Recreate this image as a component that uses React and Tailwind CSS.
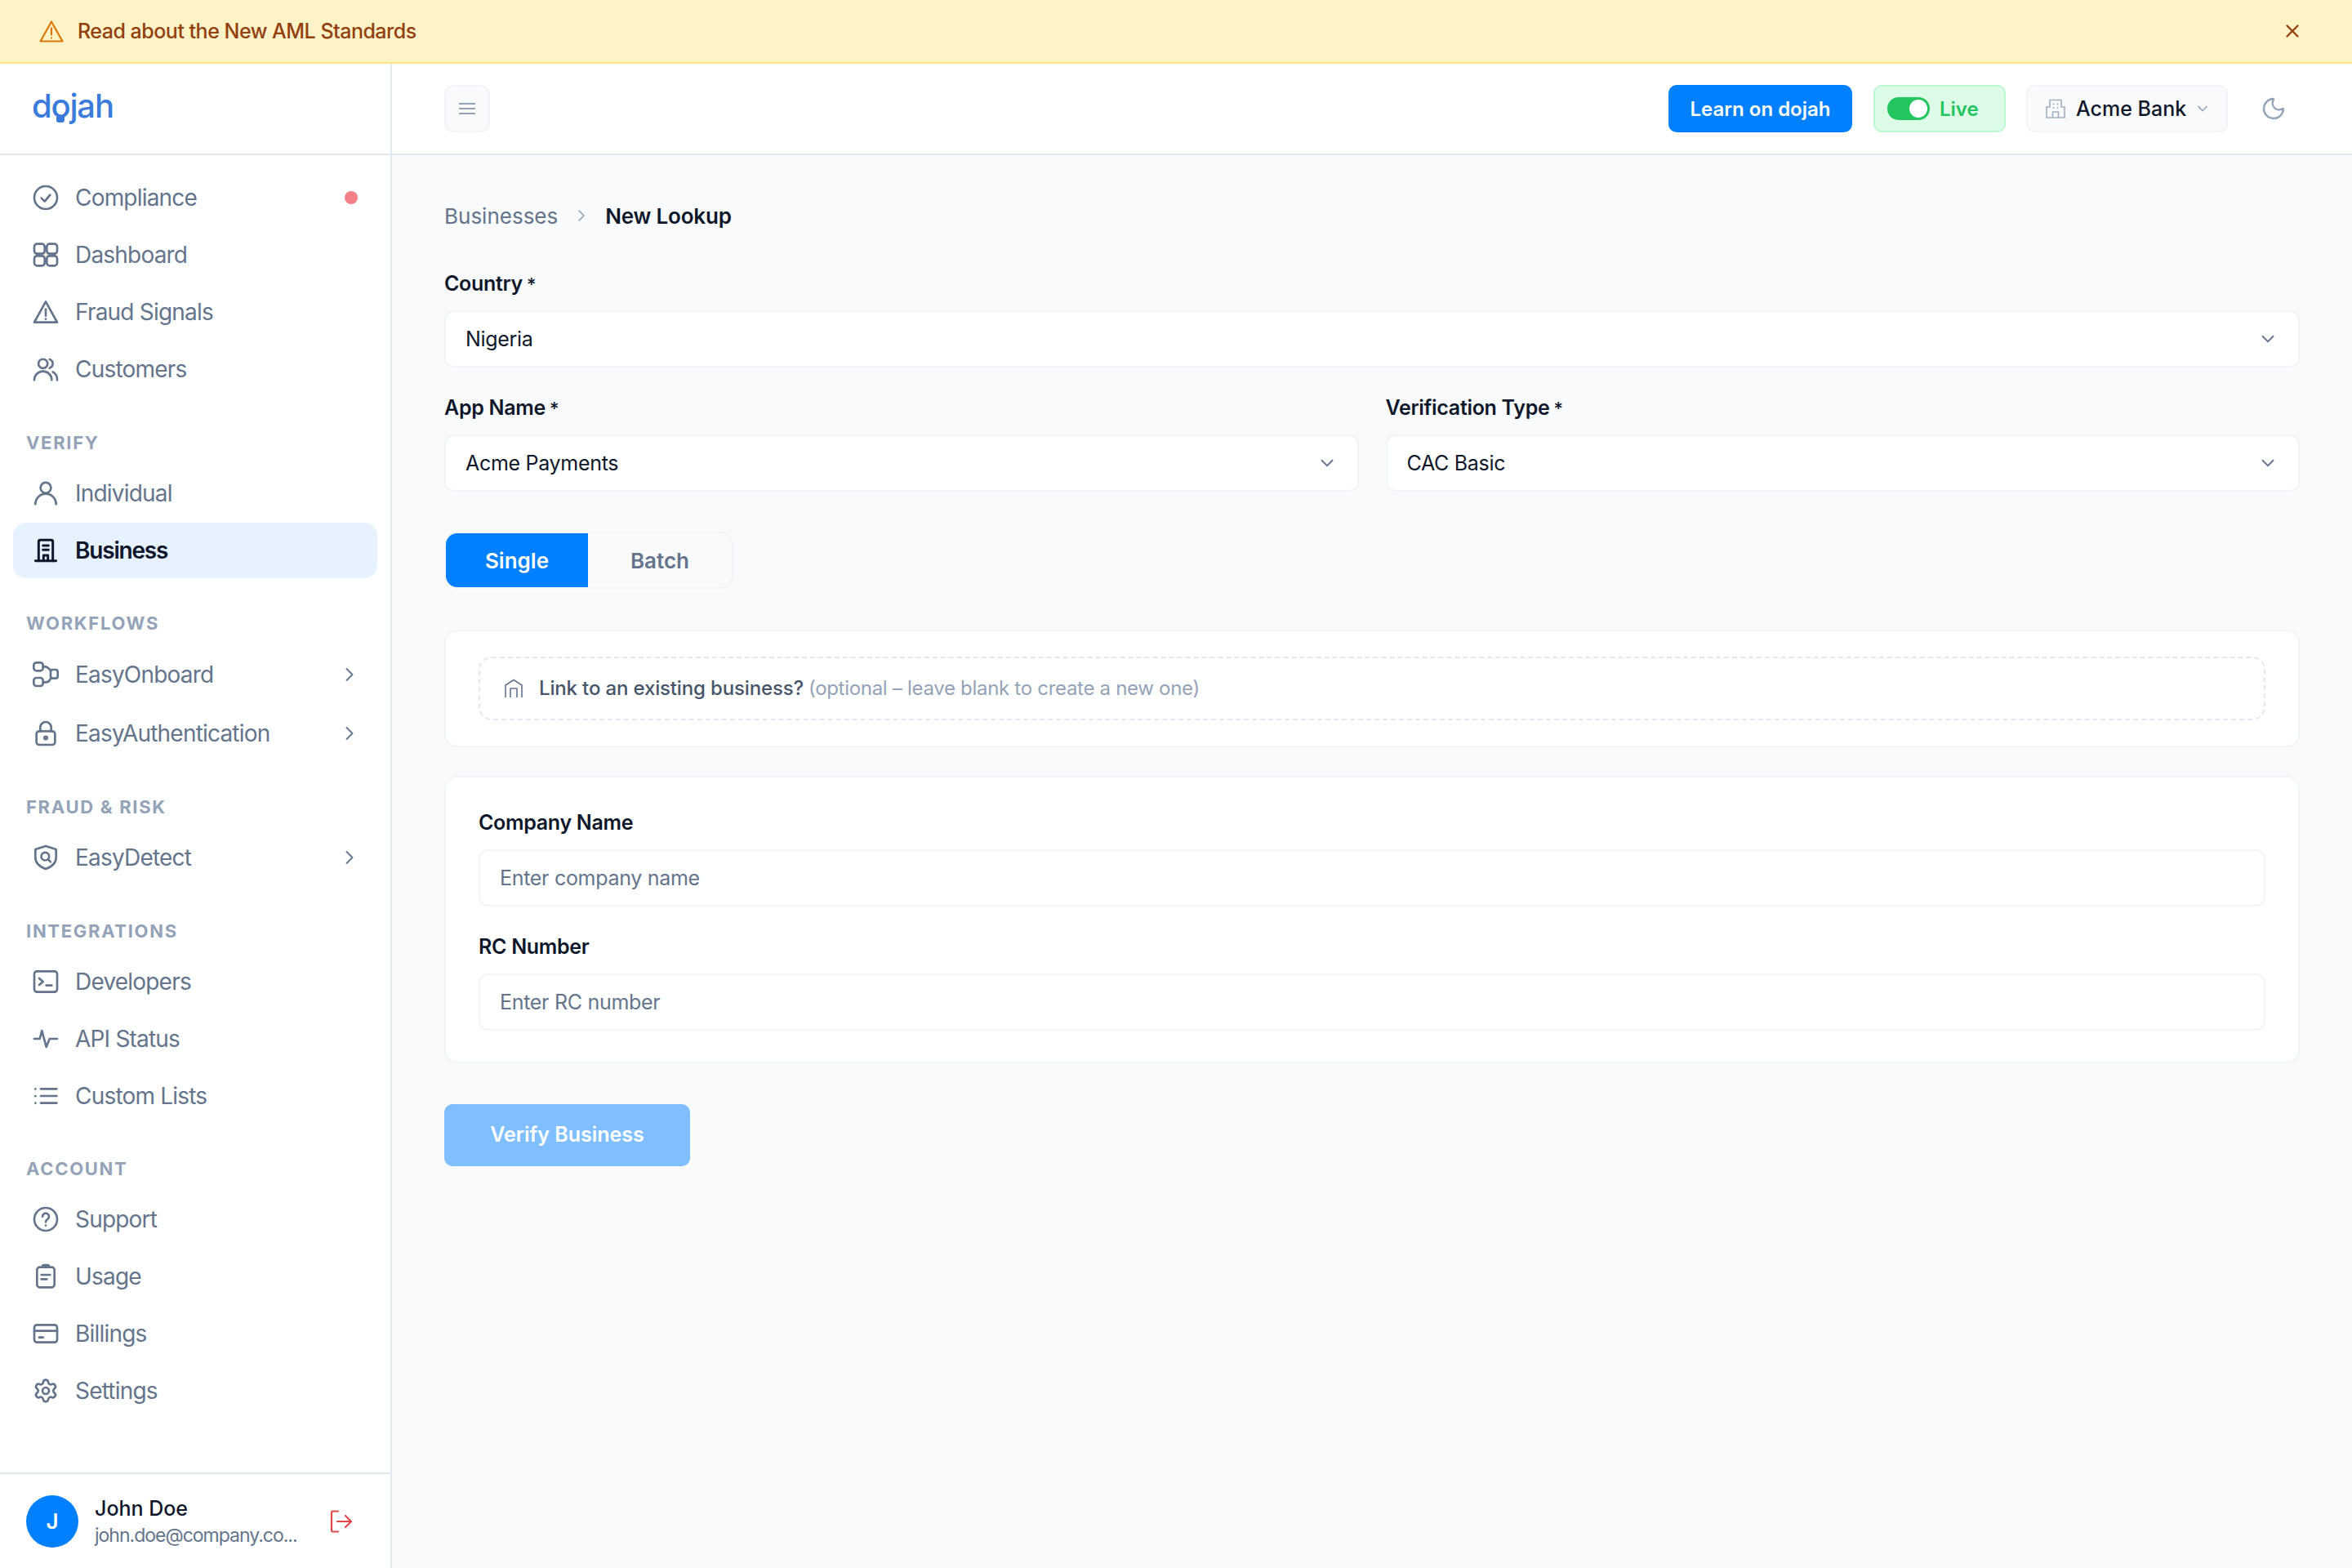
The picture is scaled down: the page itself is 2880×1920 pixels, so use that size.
import { ChevronDown, ChevronRight, Moon, Settings, X } from "lucide-react";

const Svg = ({ children, className = "w-[32px] h-[32px]", sw = 2 }) => (
  <svg viewBox="0 0 24 24" fill="none" stroke="currentColor" strokeWidth={sw} strokeLinecap="round" strokeLinejoin="round" className={`shrink-0 ${className}`}>
    {children}
  </svg>
);

const icons = {
  compliance: <Svg><circle cx="12" cy="12" r="10.5" /><path d="M8 12.5l3 3 5-6" /></Svg>,
  dashboard: (
    <Svg>
      <rect x="1.5" y="2" width="9.5" height="9" rx="2.500" />
      <rect x="13" y="2" width="9.5" height="9" rx="2.500" />
      <rect x="1.5" y="13" width="9.5" height="9" rx="2.500" />
      <rect x="13" y="13" width="9.5" height="9" rx="2.500" />
    </Svg>
  ),
  fraud: <Svg><path d="M12 2.5L22.5 21.5H1.5Z" /><path d="M12 9.5v6" /><path d="M12 18.4v.1" /></Svg>,
  customers: (
    <Svg>
      <circle cx="9.5" cy="7" r="4.2" />
      <path d="M1.5 22a8 8 0 0 1 16 0" />
      <path d="M15.5 3a4.2 4.2 0 0 1 0 8" />
      <path d="M18.5 14.5a8 8 0 0 1 4 7.5" />
    </Svg>
  ),
  individual: <Svg><circle cx="12" cy="7" r="4.8" /><path d="M2.5 22a9.5 9.5 0 0 1 19 0" /></Svg>,
  business: (
    <Svg sw={2.200}>
      <path d="M5.5 21.5V4A1.5 1.5 0 0 1 7 2.5h10A1.5 1.5 0 0 1 18.5 4v17.5" />
      <path d="M2.5 21.5h19" />
      <path d="M9.5 7.500h5" />
      <path d="M9.5 11.500h5" />
      <path d="M10 21.5V16.5h4v5" />
    </Svg>
  ),
  onboard: (
    <Svg>
      <rect x="1" y="1" width="8.5" height="7.5" rx="2.5" />
      <rect x="16.5" y="7.5" width="6.5" height="8" rx="2" />
      <rect x="1" y="15" width="8.5" height="7.5" rx="2.5" />
      <path d="M9.5 4.8h2c2 0 3 1.2 5 3.5" />
      <path d="M9.5 19h2.5c2.500 0 3.500-1 4.500-3.500" />
    </Svg>
  ),
  lock: <Svg><rect x="3.500" y="10" width="17" height="12.500" rx="2.500" /><path d="M7 10V6.500a5 5 0 0 1 10 0V10" /><circle cx="12" cy="16.200" r="1.300" /></Svg>,
  detect: (
    <Svg>
      <path d="M12 1.500L21.500 4.500V12c0 5-4 8.500-9.500 10.500C6.500 20.500 2.500 17 2.500 12V4.500Z" />
      <circle cx="11.500" cy="11" r="3.600" />
      <path d="M14.200 13.700l2.300 2.300" />
    </Svg>
  ),
  developers: <Svg><rect x="1.500" y="2.500" width="21" height="19" rx="2.500" /><path d="M6 9l3.500 3L6 15" /><path d="M12.500 15.500h5" /></Svg>,
  status: <Svg><path d="M1.500 12h5l2-7.500 4 15 3-7.500h7" /></Svg>,
  lists: (
    <Svg>
      <path d="M7.500 5.500H22" />
      <path d="M7.500 12H22" />
      <path d="M7.500 18.500H22" />
      <path d="M2.500 5.500v.1" />
      <path d="M2.500 12v.1" />
      <path d="M2.500 18.500v.1" />
    </Svg>
  ),
  support: <Svg><circle cx="12" cy="12" r="10.500" /><path d="M9 9.500a3 3 0 1 1 4.500 2.600c-1 .6-1.500 1.200-1.500 2.400" /><path d="M12 17.600v.1" /></Svg>,
  usage: (
    <Svg>
      <rect x="4" y="3.500" width="16" height="18.500" rx="2.500" />
      <path d="M9 3V2.800a1.300 1.300 0 0 1 1.300-1.300h3.400A1.300 1.300 0 0 1 15 2.800V3.500H9Z" fill="currentColor" />
      <path d="M8 10.500h8" />
      <path d="M8 14.500h5" />
    </Svg>
  ),
  billing: <Svg><rect x="1.500" y="4" width="21" height="16" rx="2.500" /><path d="M1.500 9.500h21" /><path d="M6 15.500h3.500" /></Svg>,
  settings: <Settings className="w-[32px] h-[32px] shrink-0" strokeWidth={2} />,
};

const sections = [
  {
    items: [
      { label: "Compliance", icon: "compliance", dot: true },
      { label: "Dashboard", icon: "dashboard" },
      { label: "Fraud Signals", icon: "fraud" },
      { label: "Customers", icon: "customers" },
    ],
  },
  {
    title: "VERIFY",
    wrap: "mt-[41px]",
    label: "mb-[13px]",
    items: [
      { label: "Individual", icon: "individual" },
      { label: "Business", icon: "business", active: true },
    ],
  },
  {
    title: "WORKFLOWS",
    wrap: "mt-[40px]",
    label: "mb-[13px]",
    items: [
      { label: "EasyOnboard", icon: "onboard", more: true },
      { label: "EasyAuthentication", icon: "lock", more: true },
    ],
  },
  {
    title: "FRAUD & RISK",
    wrap: "mt-[40px]",
    label: "mb-[12px]",
    items: [{ label: "EasyDetect", icon: "detect", more: true }],
  },
  {
    title: "INTEGRATIONS",
    wrap: "mt-[40px]",
    label: "mb-[13px]",
    items: [
      { label: "Developers", icon: "developers" },
      { label: "API Status", icon: "status" },
      { label: "Custom Lists", icon: "lists" },
    ],
  },
  {
    title: "ACCOUNT",
    wrap: "mt-[40px]",
    label: "mb-[13px]",
    items: [
      { label: "Support", icon: "support" },
      { label: "Usage", icon: "usage" },
      { label: "Billings", icon: "billing" },
      { label: "Settings", icon: "settings" },
    ],
  },
];

const NavItem = ({ item }) => (
  <div
    className={`flex items-center gap-[20px] pl-[24px] pr-[24px] rounded-[16px] text-[28px] ${item.more ? "h-[70px]" : "h-[68px]"} ${
      item.active ? "bg-[#e6f2ff] text-[#0f172a] font-semibold tracking-[-1.2px]" : "text-[#64748b] tracking-[-0.8px]"
    }`}
  >
    {icons[item.icon]}
    <span>{item.label}</span>
    {item.dot && <span className="ml-auto w-[16px] h-[16px] rounded-full bg-[#f4818a]" />}
    {item.more && <ChevronRight className="ml-auto mr-[-4px] w-[28px] h-[28px] text-[#64748b]" strokeWidth={1.6} />}
  </div>
);

const Sidebar = () => (
  <aside className="w-[480px] shrink-0 bg-white border-r-2 border-[#e2e8f0] flex flex-col">
    <div className="h-[112px] shrink-0 border-b-2 border-[#e2e8f0] flex items-center pl-[39px]">
      <span className="relative text-[40px] leading-none font-medium tracking-[-1.2px] text-[#3b7bdc] mt-[-7px]">
        dojah
        <span className="absolute left-[30px] top-[33px] w-[10px] h-[7px] rounded-b-[3px] bg-[#3b7bdc]" />
      </span>
    </div>
    <nav className="flex-1 px-[16px] pt-[18px]">
      {sections.map((s, i) => (
        <div key={i} className={s.wrap}>
          {s.title && (
            <div className={`h-[30px] flex items-center pl-[16px] text-[22px] font-bold tracking-[1.7px] text-[#94a3b8] ${s.label}`}>
              {s.title}
            </div>
          )}
          <div className="flex flex-col gap-[2px]">
            {s.items.map((item) => (
              <NavItem key={item.label} item={item} />
            ))}
          </div>
        </div>
      ))}
    </nav>
    <div className="h-[117px] shrink-0 border-t-2 border-[#e2e8f0] flex items-center pl-[32px] pr-[46px]">
      <div className="w-[64px] h-[64px] rounded-full bg-[#0080ff] text-white font-semibold text-[26px] flex items-center justify-center shrink-0">
        J
      </div>
      <div className="ml-[20px] mt-[-2px]">
        <div className="text-[25px] leading-[36px] font-medium text-[#0f172a]">John Doe</div>
        <div className="text-[23px] leading-[30px] tracking-[-1px] whitespace-nowrap text-[#64748b]">john.doe@company.co...</div>
      </div>
      <svg viewBox="0 0 28 28" fill="none" stroke="#e04848" strokeWidth="2.200" strokeLinecap="round" strokeLinejoin="round" className="ml-auto w-[28px] h-[28px]">
        <path d="M10 1.500H3.500A1.500 1.500 0 0 0 2 3v22a1.500 1.500 0 0 0 1.500 1.500H10" />
        <path d="M9 14h17" />
        <path d="M19 7l7 7-7 7" />
      </svg>
    </div>
  </aside>
);

const Topbar = () => (
  <header className="h-[112px] shrink-0 bg-white border-b-2 border-[#e2e8f0] flex items-center justify-between pl-[64px] pr-[80px]">
    <button className="w-[56px] h-[58px] rounded-[12px] bg-[#f8fafc] border-2 border-[#f1f5f9] flex items-center justify-center">
      <svg viewBox="0 0 20 16" fill="none" stroke="#94a3b8" strokeWidth="2" className="w-[20px] h-[16px]">
        <path d="M0 2h20" />
        <path d="M0 8h20" />
        <path d="M0 14h20" />
      </svg>
    </button>
    <div className="flex items-center">
      <button className="w-[225px] h-[58px] pt-[1px] rounded-[10px] bg-[#0080ff] text-white text-[24px] font-semibold">Learn on dojah</button>
      <div className="ml-[26px] w-[162px] h-[58px] rounded-[10px] bg-[#dcfce7] border-2 border-[#bbf7d0] flex items-center pl-[15px]">
        <span className="w-[52px] h-[28px] rounded-full bg-[#22c55e] flex items-center justify-end pr-[3px]">
          <span className="w-[22px] h-[22px] rounded-full bg-white" />
        </span>
        <span className="ml-[12px] mt-[1px] text-[24px] font-semibold text-[#22c55e]">Live</span>
      </div>
      <div className="ml-[25px] w-[247px] h-[58px] rounded-[10px] bg-[#f8fafc] border-2 border-[#f1f5f9] flex items-center pl-[22px]">
        <svg viewBox="0 0 24 24" fill="none" stroke="#a5b1c2" strokeWidth="1.700" strokeLinejoin="round" className="w-[24px] h-[24px] shrink-0">
          <path d="M1 23V10h4V1.500h14V10h4v13Z" />
          <path d="M9.500 6.500h.1M14.500 6.500h.1M9.500 11h.1M14.500 11h.1" strokeWidth="2" strokeLinecap="round" />
          <path d="M8.500 23v-7h7v7" />
        </svg>
        <span className="ml-[13px] mt-[1px] text-[25px] font-medium text-[#0f172a]">Acme Bank</span>
        <ChevronDown className="ml-[10px] w-[20px] h-[20px] text-[#94a3b8]" />
      </div>
      <Moon className="ml-[40px] w-[32px] h-[32px] text-[#94a3b8]" strokeWidth={1.800} />
    </div>
  </header>
);

const Label = ({ children, req }) => (
  <div className="h-[36px] pt-[2px] mb-[15px] flex items-center text-[25px] font-semibold text-[#0f172a] tracking-[-0.3px]">
    {children}
    {req && <span className="ml-[5px] text-[22px] font-medium">*</span>}
  </div>
);

const Select = ({ value }) => (
  <div className="h-[70px] rounded-[12px] bg-white border-2 border-[#f1f5f9] flex items-center justify-between pl-[24px] pr-[24px]">
    <span className="mt-[1px] text-[25px] tracking-[-0.3px] text-[#0f172a]">{value}</span>
    <ChevronDown className="w-[26px] h-[26px] text-[#64748b]" strokeWidth={1.700} />
  </div>
);

const TextField = ({ placeholder }) => (
  <input
    placeholder={placeholder}
    className="w-full h-[70px] rounded-[12px] bg-white border-2 border-[#f1f5f9] px-[24px] text-[25px] tracking-[-0.3px] placeholder:text-[#64748b] outline-none"
  />
);

const Main = () => (
  <main className="flex-1 min-w-0 bg-[#f8fafc] px-[64px] pt-[54px]">
    <div className="h-[40px] flex items-center text-[26px]">
      <span className="text-[#64748b]">Businesses</span>
      <ChevronRight className="mx-[17px] w-[24px] h-[24px] text-[#94a3b8]" strokeWidth={1.600} />
      <span className="font-semibold text-[#0f172a] tracking-[-0.2px]">New Lookup</span>
    </div>

    <div className="mt-[45px]">
      <Label req>Country</Label>
      <Select value="Nigeria" />
    </div>

    <div className="mt-[31px] grid grid-cols-2 gap-[33px]">
      <div>
        <Label req>App Name</Label>
        <Select value="Acme Payments" />
      </div>
      <div>
        <Label req>Verification Type</Label>
        <Select value="CAC Basic" />
      </div>
    </div>

    <div className="mt-[49px] w-[354px] h-[70px] rounded-[16px] border-2 border-[#f1f5f9] flex text-[26px] font-semibold overflow-hidden">
      <div className="w-[174px] bg-[#0080ff] text-white flex items-center justify-center">Single</div>
      <div className="flex-1 text-[#64748b] flex items-center justify-center">Batch</div>
    </div>

    <div className="mt-[50px] rounded-[16px] bg-white border-2 border-[#f1f5f9] px-[40px] py-[31px]">
      <div className="h-[78px] rounded-[16px] border-2 border-dashed border-[#e2e8f0] flex items-center pl-[29px]">
        <svg viewBox="0 0 24 24" fill="none" stroke="#64748b" strokeWidth="1.600" strokeLinejoin="round" className="w-[24px] h-[24px] shrink-0">
          <path d="M2 23V8l10-6.500L22 8v15" />
          <path d="M8 23V12h8v11" />
        </svg>
        <span className="ml-[19px] text-[24px] tracking-[-0.15px] font-medium text-[#475569]">Link to an existing business?</span>
        <span className="ml-[6px] text-[24px] tracking-[-0.3px] text-[#94a3b8]">(optional – leave blank to create a new one)</span>
      </div>
    </div>

    <div className="mt-[35px] rounded-[16px] bg-white border-2 border-[#f1f5f9] px-[40px] pt-[37px] pb-[38px]">
      <Label>Company Name</Label>
      <TextField placeholder="Enter company name" />
      <div className="mt-[31px]">
        <Label>RC Number</Label>
        <TextField placeholder="Enter RC number" />
      </div>
    </div>

    <button className="mt-[50px] w-[301px] h-[76px] rounded-[10px] bg-[#80bfff] text-white text-[25px] font-semibold">Verify Business</button>
  </main>
);

export default function App() {
  return (
    <div className="h-screen flex flex-col overflow-hidden font-['Inter',sans-serif]">
      <div className="h-[78px] shrink-0 bg-[#fef3c7] border-b-2 border-[#fde68a] flex items-center justify-between pl-[48px] pr-[60px]">
        <div className="flex items-center">
          <svg viewBox="0 0 30 27" fill="none" stroke="#d97706" strokeWidth="2.200" strokeLinecap="round" strokeLinejoin="round" className="w-[30px] h-[27px]">
            <path d="M15 1.500L28.500 25.500H1.500Z" />
            <path d="M15 9.500v8" />
            <path d="M15 21.500v.1" />
          </svg>
          <span className="ml-[17px] mt-[2px] text-[25px] font-medium text-[#92400e] tracking-[-0.5px]">Read about the New AML Standards</span>
        </div>
        <X className="w-[26px] h-[26px] text-[#92400e]" strokeWidth={2.200} />
      </div>
      <div className="flex-1 flex min-h-0">
        <Sidebar />
        <div className="flex-1 min-w-0 flex flex-col">
          <Topbar />
          <Main />
        </div>
      </div>
    </div>
  );
}
